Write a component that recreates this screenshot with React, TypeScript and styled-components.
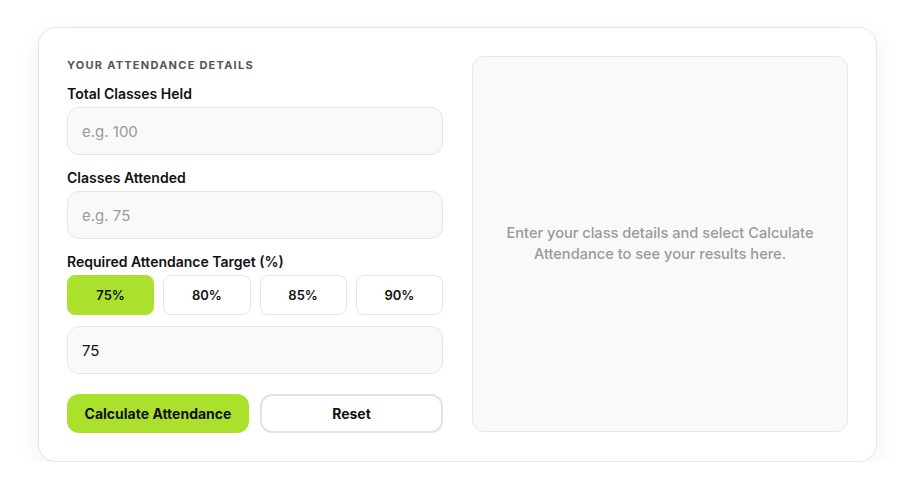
import React, { useState } from 'react';
import styled, { createGlobalStyle } from 'styled-components';

const GlobalStyle = createGlobalStyle`
  html, body {
    margin: 0;
    padding: 0;
    background: #ffffff;
    font-family: Inter, "Noto Sans", Arial, sans-serif;
    color: #111;
  }
  * { box-sizing: border-box; }
`;

const Page = styled.div`
  padding: 27px 36px 0 38px;
`;

const Card = styled.div`
  width: 839px;
  background: #fff;
  border: 1px solid #e6e6e6;
  border-radius: 18px;
  box-shadow: 0 6px 24px rgba(0, 0, 0, 0.06);
  padding: 28px;
  display: grid;
  grid-template-columns: 376px 376px;
  column-gap: 29px;
`;

const Form = styled.div`
  display: flex;
  flex-direction: column;
`;

const SectionTitle = styled.div`
  font-size: 11px;
  font-weight: 700;
  letter-spacing: 1.25px;
  color: #555;
  line-height: 18px;
  margin-bottom: 10px;
`;

const Label = styled.label`
  display: block;
  font-size: 14px;
  font-weight: 600;
  line-height: 20px;
  color: #111;
  margin-bottom: 3px;
`;

const Field = styled.div`
  margin-bottom: 13px;
`;

const Input = styled.input`
  width: 100%;
  height: 48px;
  border: 1px solid #e6e6e6;
  border-radius: 12px;
  background: #f9f9f9;
  padding: 0 14px;
  font-family: inherit;
  font-size: 15px;
  color: #111;
  outline: none;

  &::placeholder {
    color: #999;
  }
`;

const TargetRow = styled.div`
  display: grid;
  grid-template-columns: repeat(4, 1fr);
  gap: 9px;
  margin-bottom: 11px;
`;

const TargetButton = styled.button<{ $active: boolean }>`
  height: 40px;
  border-radius: 8px;
  border: 1px solid ${p => (p.$active ? '#abe12c' : '#e4e4e4')};
  background: ${p => (p.$active ? '#abe12c' : '#fff')};
  font-family: inherit;
  font-size: 13px;
  font-weight: 600;
  color: #111;
  cursor: pointer;
`;

const Actions = styled.div`
  display: grid;
  grid-template-columns: 182px 1fr;
  gap: 11px;
  margin-top: 20px;
`;

const PrimaryButton = styled.button`
  height: 39px;
  border: none;
  border-radius: 12px;
  background: #abe12c;
  font-family: inherit;
  font-size: 14px;
  font-weight: 700;
  color: #111;
  cursor: pointer;
`;

const SecondaryButton = styled.button`
  height: 39px;
  border: 2px solid #e2e2e2;
  border-radius: 12px;
  background: #fff;
  font-family: inherit;
  font-size: 14px;
  font-weight: 700;
  color: #111;
  cursor: pointer;
`;

const ResultPanel = styled.div`
  height: 376px;
  border: 1px solid #e6e6e6;
  border-radius: 12px;
  background: #f9f9f9;
  display: flex;
  align-items: center;
  justify-content: center;
  padding: 0 20px;
`;

const Placeholder = styled.p`
  margin: 0;
  text-align: center;
  font-size: 14.6px;
  line-height: 21px;
  color: #999;
  font-weight: 500;
`;

const targets = [75, 80, 85, 90];

export default function App() {
  const [target, setTarget] = useState(75);
  const [held, setHeld] = useState('');
  const [attended, setAttended] = useState('');

  return (
    <Page>
      <GlobalStyle />
      <Card>
        <Form>
          <SectionTitle>YOUR ATTENDANCE DETAILS</SectionTitle>
          <Field>
            <Label>Total Classes Held</Label>
            <Input placeholder="e.g. 100" value={held} onChange={e => setHeld(e.target.value)} />
          </Field>
          <Field>
            <Label>Classes Attended</Label>
            <Input placeholder="e.g. 75" value={attended} onChange={e => setAttended(e.target.value)} />
          </Field>
          <Label>Required Attendance Target (%)</Label>
          <TargetRow>
            {targets.map(t => (
              <TargetButton key={t} $active={t === target} onClick={() => setTarget(t)}>
                {t}%
              </TargetButton>
            ))}
          </TargetRow>
          <Input value={String(target)} onChange={e => setTarget(Number(e.target.value) || 0)} />
          <Actions>
            <PrimaryButton>Calculate Attendance</PrimaryButton>
            <SecondaryButton
              onClick={() => {
                setHeld('');
                setAttended('');
                setTarget(75);
              }}
            >
              Reset
            </SecondaryButton>
          </Actions>
        </Form>
        <ResultPanel>
          <Placeholder>
            Enter your class details and select Calculate
            <br />
            Attendance to see your results here.
          </Placeholder>
        </ResultPanel>
      </Card>
    </Page>
  );
}
